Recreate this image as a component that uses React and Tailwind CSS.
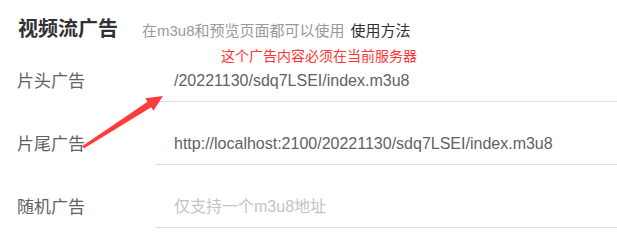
export default function App() {
  const rows = [
    { label: "片头广告", value: "/20221130/sdq7LSEI/index.m3u8" },
    { label: "片尾广告", value: "http://localhost:2100/20221130/sdq7LSEI/index.m3u8" },
    { label: "随机广告", value: "", placeholder: "仅支持一个m3u8地址" },
  ];

  return (
    <div
      className="relative w-[617px] h-[234px] bg-white overflow-hidden"
      style={{ fontFamily: '"Liberation Sans", "Noto Sans CJK SC", sans-serif' }}
    >
      <div className="pt-[15px] pl-[18px] flex items-baseline">
        <h2 className="text-[20px] leading-[28px] font-bold text-[#303133]">视频流广告</h2>
        <span className="ml-[24px] text-[15px] text-[#999999]">在m3u8和预览页面都可以使用</span>
        <span className="ml-[6px] text-[15px] text-[#303133]">使用方法</span>
      </div>

      <div className="mt-[6px] pl-[221px] text-[14px] leading-[14px] text-[#ff3333]">
        这个广告内容必须在当前服务器
      </div>

      <div className="mt-[-2px] flex flex-col gap-[22px]">
        {rows.map((row) => (
          <div key={row.label} className="flex items-center h-[41px]">
            <div className="w-[155px] pl-[17px] text-[17px] text-[#606266]">{row.label}</div>
            <div className="flex-1 h-full flex items-center pl-[19px] border-b border-[#dcdfe6] text-[16px]">
              {row.value ? (
                <span className="text-[#606266]">{row.value}</span>
              ) : (
                <span className="text-[#c0c4cc]">{row.placeholder}</span>
              )}
            </div>
          </div>
        ))}
      </div>

      <svg className="absolute left-0 top-0 pointer-events-none" width="617" height="234">
        <polygon
          points="82,146.2 147.6,101.8 145.2,98.2 163,96 153.4,110.8 151.2,107.2 84.2,148.2"
          fill="#ff3b3b"
        />
      </svg>
    </div>
  );
}
